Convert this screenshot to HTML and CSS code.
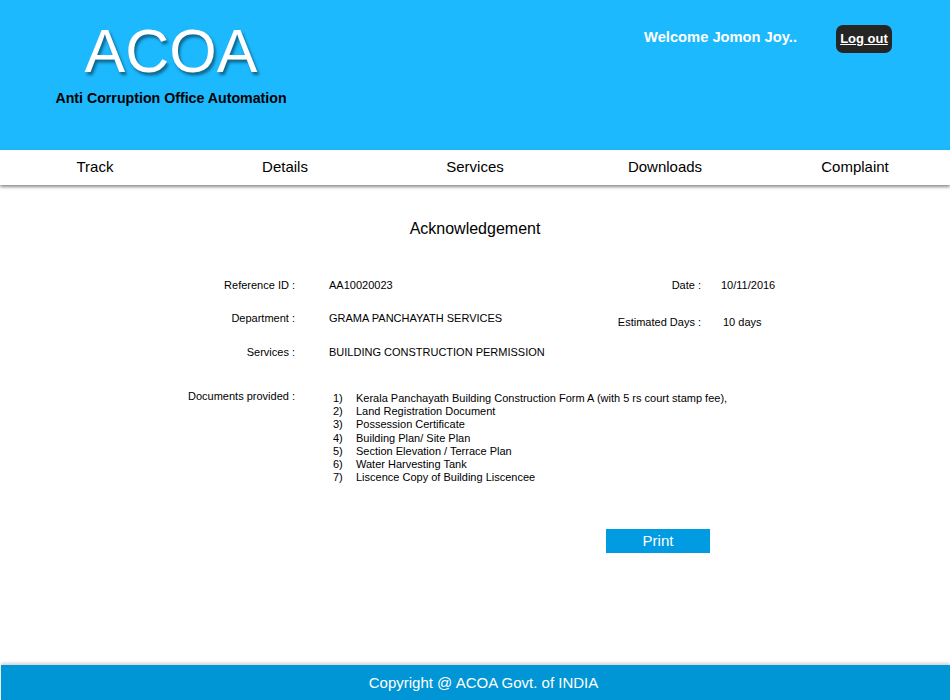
FILE: index.html
```html
<!DOCTYPE html>
<html>
<head>
<meta charset="utf-8">
<link rel="stylesheet" href="styles.css">
</head>
<body>
<header class="header">
  <div class="brand">
    <div class="logo">ACOA</div>
    <div class="tagline">Anti Corruption Office Automation</div>
  </div>
  <div class="user">
    <span class="welcome">Welcome Jomon Joy..</span>
    <a class="logout" href="#">Log out</a>
  </div>
</header>
<nav class="nav">
  <a href="#">Track</a>
  <a href="#">Details</a>
  <a href="#">Services</a>
  <a href="#">Downloads</a>
  <a href="#">Complaint</a>
</nav>
<main class="main">
  <h1 class="title">Acknowledgement</h1>
  <div class="form">
    <div class="row r1">
      <span class="label">Reference ID :</span><span class="value">AA10020023</span>
      <span class="label2">Date :</span><span class="value2">10/11/2016</span>
    </div>
    <div class="row r2">
      <span class="label">Department :</span><span class="value">GRAMA PANCHAYATH SERVICES</span>
      <span class="label2 est">Estimated Days :</span><span class="value2 est v">10 days</span>
    </div>
    <div class="row r3">
      <span class="label">Services :</span><span class="value">BUILDING CONSTRUCTION PERMISSION</span>
    </div>
    <div class="row docs">
      <span class="label">Documents provided :</span>
      <ol class="list">
        <li><span class="n">1)</span>Kerala Panchayath Building Construction Form A (with 5 rs court stamp fee),</li>
        <li><span class="n">2)</span>Land Registration Document</li>
        <li><span class="n">3)</span>Possession Certificate</li>
        <li><span class="n">4)</span>Building Plan/ Site Plan</li>
        <li><span class="n">5)</span>Section Elevation / Terrace Plan</li>
        <li><span class="n">6)</span>Water Harvesting Tank</li>
        <li><span class="n">7)</span>Liscence Copy of Building Liscencee</li>
      </ol>
    </div>
  </div>
  <div class="actions">
    <button class="print">Print</button>
  </div>
</main>
<footer class="footer">Copyright @ ACOA Govt. of INDIA</footer>
</body>
</html>
```
FILE: styles.css
```css
* { box-sizing: border-box; }
html, body { margin: 0; padding: 0; }
body {
  font-family: "Liberation Sans", Arial, sans-serif;
  width: 950px;
  height: 700px;
  background: #fff;
  color: #000;
  display: flex;
  flex-direction: column;
  overflow: hidden;
}
.header {
  height: 150px;
  background: #1cb9fe;
  display: flex;
  justify-content: space-between;
  align-items: flex-start;
}
.brand {
  padding-left: 52px;
  padding-top: 19px;
  display: flex;
  flex-direction: column;
  align-items: center;
  box-sizing: content-box;
  width: 238px;
}
.logo {
  font-size: 61px;
  line-height: 64px;
  color: #fff;
  text-shadow: 2px 3px 3px rgba(0,0,0,0.45);
}
.tagline {
  font-size: 14.2px;
  font-weight: bold;
  color: #000;
  margin-top: 7px;
  white-space: nowrap;
}
.user {
  display: flex;
  align-items: center;
  padding-top: 25px;
  padding-right: 58px;
}
.welcome {
  color: #fff;
  font-size: 14.7px;
  font-weight: bold;
  margin-right: 39px;
  margin-top: -4px;
  white-space: nowrap;
}
.logout {
  display: inline-block;
  background: #252525;
  color: #fff;
  font-size: 13px;
  font-weight: bold;
  text-decoration: underline;
  border-radius: 7px;
  height: 28px;
  line-height: 27px;
  width: 56px;
  text-align: center;
  white-space: nowrap;
}
.nav {
  height: 35px;
  display: flex;
  background: #fff;
  box-shadow: 0 2px 3px rgba(0,0,0,0.45);
  position: relative;
  z-index: 1;
}
.nav a {
  flex: 1;
  text-align: center;
  color: #000;
  text-decoration: none;
  font-size: 15px;
  line-height: 33px;
}
.main {
  flex: 1;
  display: flex;
  flex-direction: column;
}
.title {
  font-size: 16px;
  font-weight: normal;
  text-align: center;
  margin: 35px 0 0 0;
  line-height: 18px;
}
.form {
  margin-top: 41px;
  font-size: 11px;
}
.row {
  display: flex;
  align-items: flex-start;
  line-height: 13px;
}
.r2 { margin-top: 20px; }
.r3 { margin-top: 17px; }
.docs { margin-top: 31px; }
.label {
  width: 295px;
  text-align: right;
  flex: none;
}
.value {
  margin-left: 34px;
  width: 302px;
  flex: none;
}
.label2 {
  width: 70px;
  text-align: right;
  flex: none;
  white-space: nowrap;
  display: flex;
  justify-content: flex-end;
}
.value2 {
  margin-left: 20px;
}
.label2.est {
  margin-top: 4px;
}
.value2.est.v {
  margin-left: 22px;
  margin-top: 4px;
}
.list {
  list-style: none;
  margin: 2px 0 0 38px;
  padding: 0;
}
.list li {
  line-height: 13.2px;
  display: flex;
}
.n {
  width: 23px;
  flex: none;
}
.actions {
  display: flex;
  padding-left: 606px;
  margin-top: 45px;
}
.print {
  width: 104px;
  height: 24px;
  border: none;
  background: #009be0;
  color: #fff;
  font-family: "Liberation Sans", Arial, sans-serif;
  font-size: 15px;
  line-height: 22px;
  padding: 0;
}
.footer {
  height: 35px;
  margin-left: 1px;
  background: #0095d4;
  color: #fff;
  font-size: 15px;
  line-height: 36px;
  text-align: center;
  padding-left: 16px;
  box-shadow: 0 -2px 3px rgba(0,0,0,0.18);
}
```
